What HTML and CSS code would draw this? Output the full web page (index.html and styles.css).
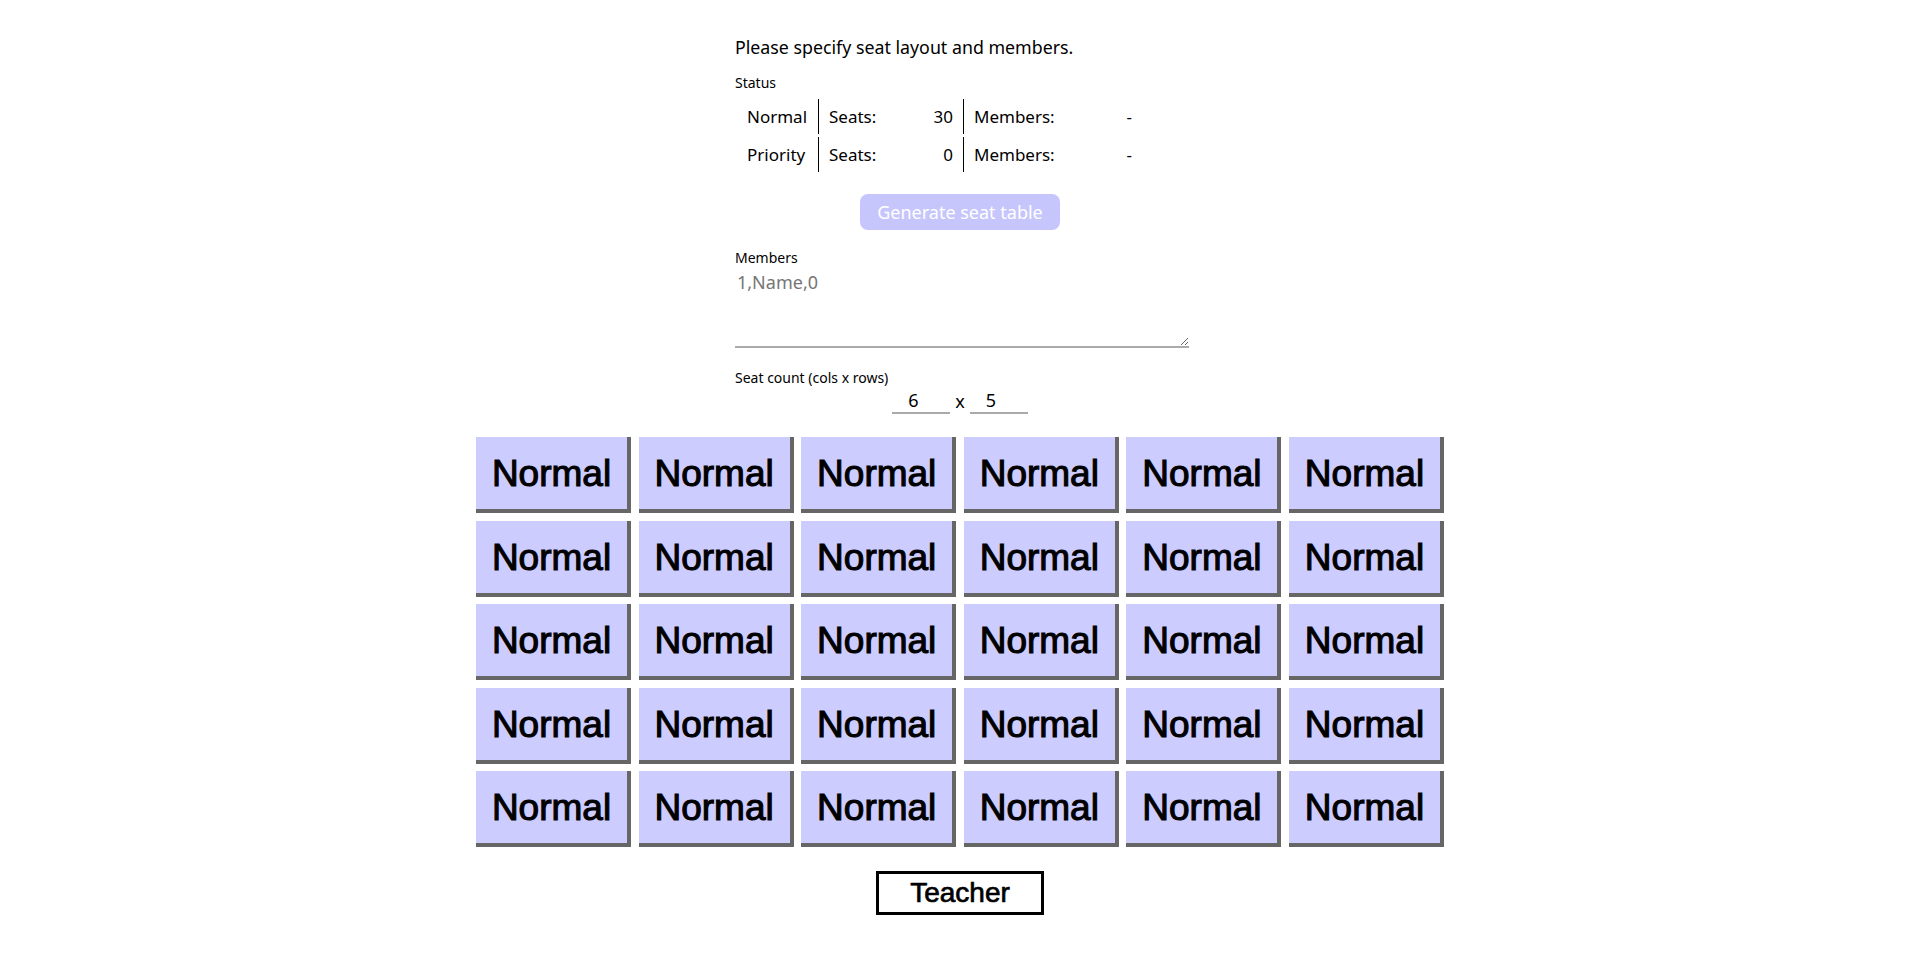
FILE: index.html
```html
<!DOCTYPE html>
<html lang="en">
<head>
<meta charset="utf-8">
<title>Seat table</title>
<link rel="stylesheet" href="styles.css">
</head>
<body>
<main class="page">
  <section class="form">
    <p class="intro">Please specify seat layout and members.</p>
    <div class="label">Status</div>
    <table class="status">
      <tr>
        <td class="kind">Normal</td>
        <td class="cell"><span class="pair seats"><span>Seats:</span><span>30</span></span></td>
        <td class="cell"><span class="pair members"><span>Members:</span><span>-</span></span></td>
      </tr>
      <tr>
        <td class="kind">Priority</td>
        <td class="cell"><span class="pair seats"><span>Seats:</span><span>0</span></span></td>
        <td class="cell"><span class="pair members"><span>Members:</span><span>-</span></span></td>
      </tr>
    </table>
    <div class="actions"><button class="generate" disabled>Generate seat table</button></div>
    <label class="label" for="members">Members</label>
    <textarea id="members" class="members-input" placeholder="1,Name,0"></textarea>
    <div class="label count-label">Seat count (cols x rows)</div>
    <div class="count">
      <input class="num" type="text" value="6">
      <span class="times">x</span>
      <input class="num" type="text" value="5">
    </div>
  </section>
  <section class="grid">
    <div class="seat">Normal</div><div class="seat">Normal</div><div class="seat">Normal</div><div class="seat">Normal</div><div class="seat">Normal</div><div class="seat">Normal</div>
    <div class="seat">Normal</div><div class="seat">Normal</div><div class="seat">Normal</div><div class="seat">Normal</div><div class="seat">Normal</div><div class="seat">Normal</div>
    <div class="seat">Normal</div><div class="seat">Normal</div><div class="seat">Normal</div><div class="seat">Normal</div><div class="seat">Normal</div><div class="seat">Normal</div>
    <div class="seat">Normal</div><div class="seat">Normal</div><div class="seat">Normal</div><div class="seat">Normal</div><div class="seat">Normal</div><div class="seat">Normal</div>
    <div class="seat">Normal</div><div class="seat">Normal</div><div class="seat">Normal</div><div class="seat">Normal</div><div class="seat">Normal</div><div class="seat">Normal</div>
  </section>
  <div class="teacher-row"><div class="teacher">Teacher</div></div>
</main>
</body>
</html>
```
FILE: styles.css
```css
html, body {
  margin: 0;
  padding: 0;
  background: #fff;
  color: #000;
  font-family: "Noto Sans", "Open Sans", sans-serif;
}

.page {
  display: flex;
  flex-direction: column;
  align-items: center;
}

.form {
  width: 450px;
  display: flex;
  flex-direction: column;
  align-items: stretch;
}

.intro {
  margin: 35px 0 0;
  font-size: 17.8px;
  line-height: 24px;
}

.label {
  display: block;
  font-size: 14px;
  line-height: 16px;
  margin-top: 16px;
}

.status {
  align-self: flex-start;
  margin-top: 5px;
  border-collapse: separate;
  border-spacing: 0 3px;
  font-size: 17px;
  line-height: 24px;
}

.status td {
  height: 35px;
  padding: 0 10px;
  vertical-align: middle;
  white-space: nowrap;
}

.status .kind {
  width: 61px;
  padding: 0 10px 0 12px;
}

.status .cell {
  border-left: 1px solid #000;
}

.pair {
  display: flex;
  justify-content: space-between;
}

.pair.seats { width: 124px; }
.pair.members { width: 158px; }

.actions {
  display: flex;
  justify-content: center;
  margin-top: 19px;
}

.generate {
  width: 200px;
  height: 36px;
  border: none;
  border-radius: 8px;
  background: #c6c6fc;
  color: #fff;
  font-family: inherit;
  font-size: 18px;
  padding: 0;
}

.actions + .label {
  margin-top: 20px;
}

.members-input {
  display: block;
  box-sizing: border-box;
  width: 454px;
  height: 80px;
  margin-top: 2px;
  padding: 2px;
  border: none;
  border-bottom: 2px solid #aaa;
  font-family: inherit;
  font-size: 18px;
  line-height: 24px;
  resize: vertical;
  outline: none;
}

.members-input::placeholder {
  color: #767676;
}

.count-label {
  margin-top: 22px;
}

.count {
  display: flex;
  justify-content: center;
  align-items: flex-end;
  gap: 5px;
  margin-top: 2px;
}

.num {
  box-sizing: border-box;
  width: 58px;
  height: 26px;
  padding: 0 0 0 16px;
  border: none;
  border-bottom: 2px solid #aaa;
  font-family: inherit;
  font-size: 18px;
  line-height: 24px;
  outline: none;
  background: transparent;
}

.times {
  font-size: 18px;
  line-height: 26px;
}

.grid {
  margin-top: 23px;
  display: grid;
  grid-template-columns: repeat(6, 155px);
  grid-auto-rows: 76px;
  column-gap: 7.6px;
  row-gap: 7.5px;
}

.seat {
  box-sizing: border-box;
  background: #ccccff;
  border-right: 4px solid #666;
  border-bottom: 4px solid #666;
  font-family: "Liberation Sans", Arial, sans-serif;
  font-size: 37px;
  line-height: 72px;
  padding-top: 1px;
  text-align: center;
  -webkit-text-stroke: 1.1px #000;
}

.teacher-row {
  margin-top: 24px;
  display: flex;
  justify-content: center;
}

.teacher {
  box-sizing: border-box;
  width: 168px;
  height: 44px;
  border: 3px solid #000;
  font-family: "Liberation Sans", Arial, sans-serif;
  font-size: 28px;
  line-height: 38px;
  text-align: center;
  -webkit-text-stroke: 0.7px #000;
}
```
